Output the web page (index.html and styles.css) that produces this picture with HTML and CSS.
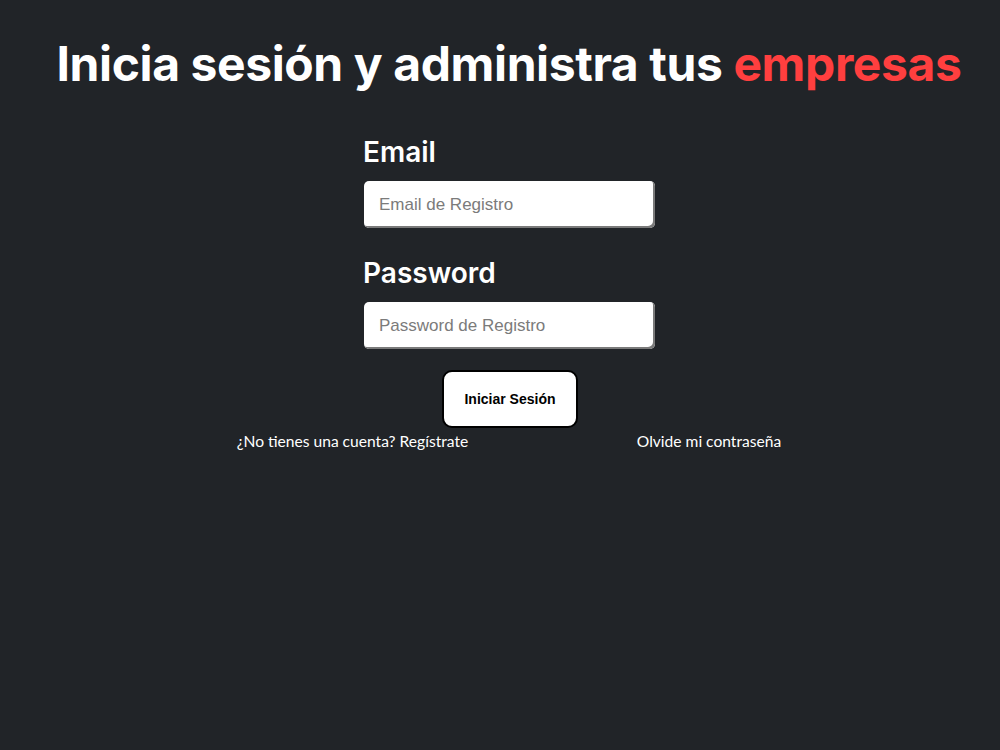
FILE: index.html
```html
<!DOCTYPE html>
<html lang="es">
<head>
    <meta charset="UTF-8">
    <meta name="viewport" content="width=device-width, initial-scale=1.0">
    <title>Iniciar Sesión</title>
    <link rel="stylesheet" href="styles.css">
</head>
<body>
    <h1 class="titulo">Inicia sesión y administra tus <span class="resaltado">empresas</span></h1>

    <form class="formulario">
        <div class="campo">
            <label for="email">Email</label>
            <input type="email" id="email" placeholder="Email de Registro">
        </div>
        <div class="campo">
            <label for="password">Password</label>
            <input type="password" id="password" placeholder="Password de Registro">
        </div>
        <button type="submit" class="boton">Iniciar Sesión</button>
    </form>

    <nav class="acciones">
        <a href="#">¿No tienes una cuenta? Regístrate</a>
        <a href="#">Olvide mi contraseña</a>
    </nav>
</body>
</html>
```

FILE: styles.css
```css
body {
    margin: 0;
    padding: 0 0 0 18px;
    background-color: #212428;
    color: #fff;
    font-family: 'Inter', 'Lato', sans-serif;
    min-height: 100vh;
}
.titulo {
    margin: 0;
    padding-top: 34px;
    text-align: center;
    font-size: 48px;
    font-weight: 700;
    letter-spacing: -0.4px;
}
.resaltado {
    color: #ff3f3f;
}
.formulario {
    width: 292px;
    margin: 42px auto 0;
    display: flex;
    flex-direction: column;
}
.campo {
    display: flex;
    flex-direction: column;
    margin-bottom: 28px;
}
.campo:last-of-type {
    margin-bottom: 21px;
}
.campo label {
    font-size: 28px;
    font-weight: 600;
    margin-bottom: 12px;
}
.campo input {
    margin-left: 1px;
    height: 47px;
    box-sizing: border-box;
    padding: 0 15px;
    border: none;
    border-radius: 5px;
    box-shadow: inset -2px -2px 0 #7a7a7a;
    font-family: 'Liberation Sans', Arial, sans-serif;
    font-size: 17px;
    color: #333;
    outline: none;
}
.campo input::placeholder {
    color: #7b7b7b;
}
.boton {
    align-self: center;
    margin-left: 2px;
    width: 136px;
    height: 58px;
    background: #fff;
    border: 2px solid #000;
    border-radius: 10px;
    font-family: 'Liberation Sans', Arial, sans-serif;
    font-size: 14px;
    font-weight: 700;
    color: #000;
    cursor: pointer;
}
.acciones {
    width: 713px;
    margin: 4px auto 0;
    display: flex;
    justify-content: space-around;
}
.acciones a {
    color: #fff;
    text-decoration: none;
    font-family: 'Lato', sans-serif;
    font-size: 15.6px;
}
```
